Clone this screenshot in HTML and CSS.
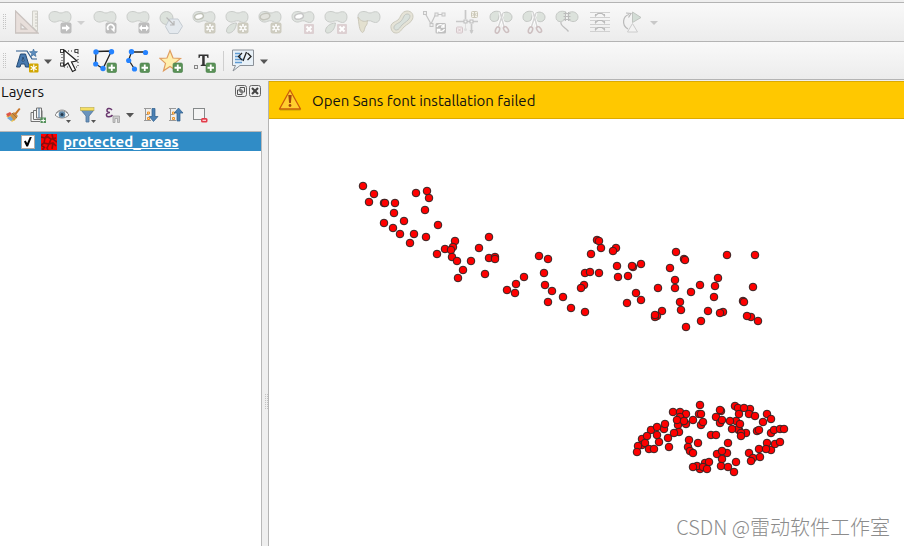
FILE: index.html
```html
<!DOCTYPE html>
<html lang="en">
<head>
<meta charset="utf-8">
<title>Layers</title>
<link rel="stylesheet" href="styles.css">
</head>
<body>
<svg class="defs" aria-hidden="true">
  <defs>
    <path id="blob" d="M1 6.500C1 3 3.500 1.500 7 1.500C10 1.500 10.500 3 13 3C15 3 16 1.700 18.500 1.700C21.500 1.700 23 4 23 7C23 10.500 21 12.500 18.500 12.500C15.500 12.500 14.500 10.300 11.500 10.800C9 11.200 8 12.500 5.500 12C2.500 11.500 1 9.500 1 6.500Z" fill="#dfe3df" stroke="#c9ccc9"/>
    <path id="leaf" d="M11.500 13C6 13 1.500 17 1.500 21C1.500 23 3.500 23.500 5.500 22.700C9 21.500 11 17.500 11.500 13Z" fill="#dce2dc" stroke="#c6c9c6"/>
    <g id="star-badge"><rect x="12.500" y="12.500" width="11" height="11" rx="2" fill="#cdcbbf"/><path d="M18 14v8M14.500 16l7 4M21.500 16l-7 4" stroke="#fff" stroke-width="1.600"/><circle cx="18" cy="18" r="1.200" fill="#cdcbbf"/></g>
    <g id="x-badge"><rect x="13" y="14" width="10" height="10" rx="1" fill="#ddd0d2"/><path d="M15.500 16.500l5 5M20.500 16.500l-5 5" stroke="#fff" stroke-width="2"/></g>
    <g id="plus-badge"><rect x="14" y="14" width="9.500" height="9.500" rx="1.500" fill="#5a9157" stroke="#47804a" stroke-width=".6"/><path d="M18.750 15.500v6.500M15.500 18.750h6.500" stroke="#fff" stroke-width="1.800"/></g>
    <g id="grey-badge"><rect x="12.500" y="12.500" width="11" height="11" rx="2" fill="#bdbdbd"/></g>
    <g id="scissors" fill="none"><path d="M11 2C7 0 1 2 1 7C1 12 6 12.500 9 10Z" fill="#dce2dc" stroke="#c4c7c4"/><path d="M13 4C17 0 23 3 23 7C23 12 17 13 14.500 10Z" fill="#dce2dc" stroke="#c4c7c4"/><path d="M11 2L15.500 18M14 3L9 18" stroke="#fff" stroke-width="3"/><path d="M11 2L15.500 18M14 3L9 18" stroke="#d4d4d4" stroke-width="1.500"/><ellipse cx="8.500" cy="20" rx="1.900" ry="3.300" transform="rotate(20 8.500 20)" stroke="#cdbfc0" stroke-width="1.600"/><ellipse cx="17" cy="19.500" rx="1.900" ry="3.300" transform="rotate(-35 17 19.500)" stroke="#cdbfc0" stroke-width="1.600"/></g>
  </defs>
</svg>

<div class="window">
  <header class="toolbars">
    <div class="toolbar" role="toolbar" aria-label="Advanced digitizing">
      <span class="grip"></span>
      <button class="tool" disabled aria-label="Enable advanced digitizing"><svg viewBox="0 0 24 24"><path d="M0.500 1V23H23Z M6 14v5h5.500Z" fill="#e8dfdb" fill-rule="evenodd" stroke="#c9c2bf" stroke-width="1.300"/><path d="M17.500 1h5v20.500l-5-5Z" fill="#efeee8" stroke="#cfcec8"/><path d="M20 4h2.500M20 7h2.500M20 10h2.500M20 13h2.500M20 16h2.500" stroke="#c7c6c0"/></svg></button>
      <div class="split">
        <button class="tool" disabled aria-label="Move feature"><svg viewBox="0 0 24 24"><use href="#blob"/><use href="#grey-badge"/><path d="M14 16.800h4v-2.300l4 3.500-4 3.500v-2.300h-4Z" fill="#fff"/></svg></button>
        <button class="caret" disabled aria-label="More move tools"><svg viewBox="0 0 12 24"><path d="M5 11h8l-4 4Z" fill="#d0d0d0"/></svg></button>
      </div>
      <button class="tool" disabled aria-label="Rotate feature"><svg viewBox="0 0 24 24"><use href="#blob"/><use href="#grey-badge"/><path d="M15.500 20A3.200 3.200 0 1 1 20.500 19.500" fill="none" stroke="#fff" stroke-width="1.700"/><path d="M17.500 18.500h4v4Z" fill="#fff"/></svg></button>
      <button class="tool" disabled aria-label="Scale feature"><svg viewBox="0 0 24 24"><use href="#blob"/><use href="#grey-badge"/><path d="M13 18l3-3.200v2.200h4v-2.200l3 3.200-3 3.200v-2.200h-4v2.200Z" fill="#fff"/></svg></button>
      <button class="tool" disabled aria-label="Simplify feature"><svg viewBox="0 0 24 24"><circle cx="7.500" cy="8" r="6.500" fill="#dce2dc" stroke="#c6c9c6"/><path d="M10.500 9h8.500l4.500 7.300-4.500 7.200h-8.500L6.500 16.500Z" fill="#e4e9ee" stroke="#c4cbd1"/><path d="M7.500 7.500l7 7M15 11v4h-4" stroke="#b6b6b6" stroke-width="1.200" fill="none"/></svg></button>
      <button class="tool" disabled aria-label="Add ring"><svg viewBox="0 0 24 24"><use href="#blob"/><ellipse cx="7" cy="6.500" rx="4.500" ry="2.700" fill="#fff" stroke="#bfc1b7" stroke-width="1.500" transform="rotate(-15 7 6.500)"/><use href="#star-badge"/></svg></button>
      <button class="tool" disabled aria-label="Add part"><svg viewBox="0 0 24 24"><use href="#blob"/><use href="#leaf"/><use href="#star-badge"/></svg></button>
      <button class="tool" disabled aria-label="Fill ring"><svg viewBox="0 0 24 24"><use href="#blob"/><ellipse cx="7" cy="6.500" rx="5" ry="3" fill="#e2e2dc" stroke="#c4c4bb" stroke-width="1.500" transform="rotate(-15 7 6.500)"/><use href="#star-badge"/></svg></button>
      <button class="tool" disabled aria-label="Delete ring"><svg viewBox="0 0 24 24"><use href="#blob"/><ellipse cx="8" cy="6.500" rx="4.500" ry="2.700" fill="#fff" stroke="#c6c6c6" stroke-width="1.500" transform="rotate(-15 8 6.500)"/><use href="#x-badge"/></svg></button>
      <button class="tool" disabled aria-label="Delete part"><svg viewBox="0 0 24 24"><use href="#blob"/><use href="#leaf"/><use href="#x-badge"/></svg></button>
      <button class="tool" disabled aria-label="Reshape features"><svg viewBox="0 0 24 24"><use href="#blob"/><path d="M1 7C2 13 2 21 5.500 22.500C8 22 7 17 9.500 15C11 13.500 9.500 11 11 10.500C8 12 4 12 1 7Z" fill="#e3e0cf" stroke="#cbc8ba"/></svg></button>
      <button class="tool" disabled aria-label="Offset curve"><svg viewBox="0 0 24 24"><path d="M1 18C0 13 5 12 8 10C11 7 11 1.500 17 1C22 1 24 5 22.500 9C21 13 17 14 14 17C11 20 10 23 6 23C3 23 1.500 21 1 18Z" fill="#e5e3d7" stroke="#cccabd"/><path d="M4 18C3.500 15 7 14 10 12C14 9 13 4.500 17 4C20 4 20.500 6 19.500 8C18 11 15 12 12 15C10 17 9 20 6.500 20C5 20 4 19 4 18Z" fill="#dae1dc" stroke="#c2c6c1"/></svg></button>
      <button class="tool" disabled aria-label="Split features"><svg viewBox="0 0 24 24"><path d="M2 3l6 11L12.500 4.500H21" fill="none" stroke="#c4c4c4" stroke-width="1.200"/><g fill="#eee" stroke="#c4c4c4"><rect x=".5" y="1.500" width="3" height="3"/><rect x="7" y="13.500" width="3" height="3"/><rect x="12" y="3" width="3" height="3"/><rect x="19" y="3" width="3" height="3"/></g><rect x="12.500" y="13" width="10.500" height="10.500" rx="1.500" fill="#bfbfbf"/><path d="M14 17c1-3 5-3 6.500-1M21 14v3h-3M21.500 19c-1 3-5 3-6.500 1M14.500 22.500v-3h3" fill="none" stroke="#fff" stroke-width="1.300"/></svg></button>
      <button class="tool" disabled aria-label="Vertex tool"><svg viewBox="0 0 24 24"><path d="M9.500 0v9M15.500 14v9M0 11.500h22" stroke="#c8c8c8" stroke-width="1.700"/><path d="M9.500 12v7" stroke="#ddd"/><g fill="#f4f4f4" stroke="#bdbdbd"><rect x="8" y="10" width="3" height="3"/><rect x="14" y="10" width="3" height="3"/></g><path d="M13.500 20h4l-2 4Z" fill="#c8c8c8"/><circle cx="9.500" cy="19.500" r="1.500" fill="#ddd"/><rect x="15.500" y="1.500" width="6" height="6" rx="1" fill="#f4f2e9" stroke="#cbc8b9"/><path d="M18.500 2v5M16.500 3.500l4 2M20.500 3.500l-4 2" stroke="#cbc8b9"/><rect x=".5" y="17" width="6" height="6" rx="1" fill="#f3eaec" stroke="#d4c7ca"/><path d="M2 18.500l3 3M5 18.500l-3 3" stroke="#d4c7ca"/></svg></button>
      <button class="tool" disabled aria-label="Split parts"><svg viewBox="0 0 24 24"><use href="#scissors"/></svg></button>
      <button class="tool" disabled aria-label="Split geometry"><svg viewBox="0 0 24 24"><use href="#scissors"/></svg></button>
      <button class="tool" disabled aria-label="Merge features"><svg viewBox="0 0 24 24"><path d="M11 2C6 0 1 2 1 7C1 12 6 13 10 9.500Z" fill="#dce2dc" stroke="#c6c9c6"/><path d="M13 3C18 0 23 3 23 7C23 12 17 13 13.500 9.500Z" fill="#dce2dc" stroke="#c6c9c6"/><path d="M8.500 3.500h7M8.500 6.500h7M8.500 9.500h7M10.500 2v9M13.500 2v9" stroke="#bcbcbc"/><path d="M6 12C5 16 10 17 13.500 21.500" fill="none" stroke="#bebebe" stroke-width="1.300"/></svg></button>
      <button class="tool" disabled aria-label="Merge attributes"><svg viewBox="0 0 24 24"><path d="M2 2.500h20M2 7.500h20M2 10.500h20M2 14.500h20M2 17.500h20M2 21.500h20" stroke="#d0d0d0"/><path d="M7 6l3-2.500h4L17 6M7 13l3-2.500h4L17 13M7 20l3-2.500h4L17 20" fill="none" stroke="#b8b8b8" stroke-width="1.200"/><path d="M7.500 4v2.500M16.500 4v2.500M7.500 11v2.500M16.500 11v2.500M7.500 18v2.500M16.500 18v2.500" fill="none" stroke="#bbb"/></svg></button>
      <div class="split">
        <button class="tool" disabled aria-label="Rotate symbols"><svg viewBox="0 0 24 24"><path d="M11.500 2v10.500l8.500-5Z" fill="#d3ddd6" stroke="#c0c4c0"/><path d="M11.500 13.500l5 8.500h-10Z" fill="#f3f3f3" stroke="#ccc"/><path d="M7 19C0 15 2 6 8 4.500M5 3l5 .5-2.500 4" fill="none" stroke="#b9b9b9" stroke-width="1.200"/></svg></button>
        <button class="caret" disabled aria-label="More rotate tools"><svg viewBox="0 0 12 24"><path d="M5 11h8l-4 4Z" fill="#c8c8c8"/></svg></button>
      </div>
    </div>
    <div class="toolbar" role="toolbar" aria-label="Annotations">
      <span class="grip"></span>
      <div class="split">
        <button class="tool" aria-label="New annotation layer"><svg viewBox="0 0 24 24"><path d="M1 2h11l5 8h5" fill="none" stroke="#2c5a8c" stroke-width="1.200"/><path d="M1.500 18L5.500 5h5l4 13h-4l-.8-3H6L5 18ZM7 12h2.200L8 8Z" fill="#487ab0" stroke="#244b75" fill-rule="evenodd"/><path d="M18.500 0l1 2.500 3 .2-2.300 1.800.8 3-2.500-1.600L16 7.500l.8-3L14.500 2.700l3-.2Z" fill="#5d8dbe" stroke="#346695" stroke-width=".6"/><rect x="14" y="14.500" width="9.500" height="9" rx="1" fill="#d1a600"/><path d="M18.750 15.500v7M15.700 17.200l6 3.600M21.700 17.200l-6 3.600" stroke="#fff" stroke-width="1.200"/></svg></button>
        <button class="caret" aria-label="More annotation layers"><svg viewBox="0 0 12 24"><path d="M5 10.500h8l-4 4.500Z" fill="#555"/></svg></button>
      </div>
      <button class="tool" aria-label="Select annotation"><svg viewBox="0 0 24 24"><path d="M2 2h16v16H2Z" fill="none" stroke="#333" stroke-dasharray="1 2"/><g fill="#f6f6f6" stroke="#444"><rect x=".5" y=".5" width="3" height="3"/><rect x="15" y=".5" width="3" height="3"/><rect x=".5" y="14" width="3" height="3"/></g><path d="M4 1v16l4-3 4.500 8.500 3-1.500-4-8 5.500-1Z" fill="#fff" stroke="#222" stroke-width="1.200"/></svg></button>
      <button class="tool" aria-label="Create polygon annotation"><svg viewBox="0 0 24 24"><path d="M3 2.500L18.500 2L10 19.500 2.500 15Z" fill="#f5f5f5" stroke="#222" stroke-width="1.300"/><g fill="#2583ff"><circle cx="3" cy="2.900" r="2.700"/><circle cx="18.500" cy="2.800" r="2.700"/><circle cx="2.700" cy="15" r="2.600"/><circle cx="10" cy="19.500" r="2.700"/></g><use href="#plus-badge"/></svg></button>
      <button class="tool" aria-label="Create line annotation"><svg viewBox="0 0 24 24"><path d="M19.500 3L5.500 2.800 2.700 11 8.500 20" fill="none" stroke="#222" stroke-width="1.300"/><g fill="#2583ff"><circle cx="19.500" cy="3.500" r="2.600"/><circle cx="5.500" cy="2.800" r="2.700"/><circle cx="2.700" cy="11.500" r="2.600"/><circle cx="8.500" cy="20" r="2.600"/></g><use href="#plus-badge"/></svg></button>
      <button class="tool" aria-label="Create marker annotation"><svg viewBox="0 0 24 24"><path d="M11 1.500l3 7.500 7.500.4-6 5 2 7.400L11 17.500l-6.500 4.300 2-7.400-5.500-5L8 9Z" fill="#ffefad" stroke="#df9d60" stroke-width="1.200"/><use href="#plus-badge"/></svg></button>
      <button class="tool" aria-label="Create text annotation"><svg viewBox="0 0 24 24"><path d="M6.500 5.500h10v3.500h-1l-.7-2H12.700V15.500l1.500.5v1h-5.500v-1l1.500-.5V7H8.200L7.500 9h-1Z" fill="#333"/><rect x="2.500" y="16.500" width="3" height="3" fill="#eee" stroke="#888"/><use href="#plus-badge"/></svg></button>
      <span class="separator"></span>
      <div class="split">
        <button class="tool" aria-label="HTML annotation"><svg viewBox="0 0 24 24"><path d="M1.500 1h21v15.500H9L2 22l2.500-5.500h-3Z" fill="#e8f1f8" stroke="#8c9299"/><path d="M4 4.500h5M4 7.500h6M4 10.500h9M4 13.500h7" stroke="#5e9bd2" stroke-width="1.600"/><path d="M11 4l-3.500 3.500L11 11M16.500 4L20 7.500 16.500 11M15.500 3l-3.500 9" fill="none" stroke="#222" stroke-width="1.300"/></svg></button>
        <button class="caret" aria-label="More annotations"><svg viewBox="0 0 12 24"><path d="M5 10.500h8l-4 4.500Z" fill="#555"/></svg></button>
      </div>
    </div>
  </header>

  <div class="workspace">
    <aside class="panel">
      <div class="panel-title">
        <h1>Layers</h1>
        <button class="dock" aria-label="Float panel"><svg viewBox="0 0 12 12"><rect x=".5" y=".5" width="11" height="11" rx="2" fill="none" stroke="#666"/><path d="M5 2.500h4.500v4.500H5ZM2.500 5H7v4.500H2.500Z" fill="#eee" stroke="#555"/></svg></button>
        <button class="dock" aria-label="Close panel"><svg viewBox="0 0 12 12"><rect x=".5" y=".5" width="11" height="11" rx="2" fill="none" stroke="#666"/><path d="M3 3l6 6M9 3l-6 6" stroke="#444" stroke-width="2"/></svg></button>
      </div>
      <div class="panel-tools" role="toolbar" aria-label="Layer tools">
        <button class="small" aria-label="Layer styling"><svg viewBox="0 0 16 16"><path d="M1 9l4-3 7 5-5 4Z" fill="#f2c74b"/><path d="M1 7l4-2 2 2-4 3Z" fill="#dd5648"/><path d="M2 11l4-2 3 3-3 2Z" fill="#6fa9de"/><path d="M5 8l4-3 4 4-4 5Z" fill="#cf9240"/><path d="M9 7l5-6 1.500 1L11 8Z" fill="#c87628"/><path d="M7 6l5 5" stroke="#996c45"/></svg></button>
        <button class="small" aria-label="Add group"><svg viewBox="0 0 16 16"><g fill="#f4f4f4" stroke="#727272"><path d="M3.500 5.500h-2.500v9h9M6 3.500h-2.500v9h8.500v-9"/><path d="M6.500 1h5v10h-5Z"/></g><path d="M9 1v10" stroke="#426d94"/><path d="M10.500 10.500h5.500v5.500h-5.500Z" fill="#54915a"/><path d="M13.250 11.500v4M11.250 13.500h4" stroke="#fff"/></svg></button>
        <button class="small" aria-label="Manage map themes"><svg viewBox="0 0 16 16"><path d="M0 8C3 3 10 2 14 8C10 12 4 12 0 8Z" fill="#fafafa" stroke="#888"/><circle cx="7" cy="7.500" r="3.300" fill="#628bab"/><circle cx="7" cy="7.500" r="1.500" fill="#25384a"/><path d="M1 6C4 2 10 2 13 6" fill="none" stroke="#999"/><path d="M11 13h5l-2.500 3Z" fill="#555"/></svg></button>
        <button class="small" aria-label="Filter legend"><svg viewBox="0 0 16 16"><path d="M1 3l5 6v6h3V9l5-6Z" fill="#6a94bd" stroke="#4b7299" stroke-width=".8"/><rect x=".5" y=".5" width="13.500" height="3" fill="#f5df63" stroke="#b9aa4c" stroke-width=".6"/><path d="M11 13h5l-2.500 3Z" fill="#555"/></svg></button>
        <button class="small" aria-label="Filter legend by expression"><svg viewBox="0 0 16 16"><path d="M7 3C5 .5 1.500 1.500 2 3.500C2 5 4 5.500 5 5.500C2.500 5.500 1 7 1.500 8.500C2 10.500 6 10 7.500 8" fill="none" stroke="#69376e" stroke-width="1.500"/><path d="M8 9h6.500v6.500h-2v-4h-2.500v4H8Z" fill="#ccc" stroke="#999" stroke-width=".7"/></svg></button>
        <button class="small-caret" aria-label="More filters"><svg viewBox="0 0 8 16"><path d="M0 6h8l-4 4.500Z" fill="#555"/></svg></button>
        <button class="small" aria-label="Expand all"><svg viewBox="0 0 16 16"><path d="M1 1.500h7M2.500 1.500v12M1 13.500h7M2.500 7.500h3" fill="none" stroke="#999"/><path d="M4.500 5h2v2h-2ZM4.500 10.500h2v2h-2Z" fill="#ffe0a8" stroke="#ee942c"/><path d="M9 1.500h3v8h3L10.500 14.500 6.300 9.500h2.700Z" fill="#4b80b4" stroke="#2b5b8a" stroke-width=".7"/></svg></button>
        <button class="small" aria-label="Collapse all"><svg viewBox="0 0 16 16"><path d="M1 1.500h7M2.500 1.500v12M1 13.500h7M2.500 7.500h3" fill="none" stroke="#999"/><path d="M4.500 5h2v2h-2ZM4.500 10.500h2v2h-2Z" fill="#ffe0a8" stroke="#ee942c"/><path d="M9 14h3V6h3L10.500 1 6.300 6h2.700Z" fill="#4b80b4" stroke="#2b5b8a" stroke-width=".7"/></svg></button>
        <button class="small" aria-label="Remove layer"><svg viewBox="0 0 16 16"><rect x=".5" y="1.500" width="11" height="11" fill="#f4f4f4" stroke="#85898a"/><rect x="8" y="11" width="6.500" height="4.500" rx="1.500" fill="#e33c4b"/><path d="M9.500 13.250h3.500" stroke="#fff"/></svg></button>
      </div>
      <ul class="tree">
        <li class="layer">
          <input type="checkbox" id="layer-visible" checked>
          <svg class="swatch" viewBox="0 0 16 16" aria-hidden="true"><rect width="16" height="16" fill="#f00"/><path d="M0 3l4 1 3-4M4 4l-1 5 5 1 2-5-3-2ZM8 10l-2 4 1 2M3 9l-3 2 4 3M10 5l5-1M8 10l4-1 3 3M12 9l-1 6M11 0l1 5 4 3M2 14v2" fill="none" stroke="#8c0c0c" stroke-width="1.600"/></svg>
          <label for="layer-visible">protected_areas</label>
        </li>
      </ul>
    </aside>
    <div class="splitter"></div>
    <main class="map">
      <div class="message" role="alert">
        <svg viewBox="0 0 24 24" aria-hidden="true"><path d="M12 2L22.500 21h-21Z" fill="#ffce2e" stroke="#cb5c0c" stroke-width="1.300" stroke-linejoin="round"/><path d="M2 22h20.500" stroke="#a98300" opacity=".6"/><path d="M10.300 7h3.400l-.8 8h-1.800Z" fill="#a4480a"/><circle cx="12" cy="17.500" r="1.400" fill="#a4480a"/></svg>
        <span>Open Sans font installation failed</span>
      </div>
      <div class="canvas">
        <svg class="points" role="img" aria-label="protected_areas"><g id="points" transform="translate(-269 -119)"></g></svg>
        <p class="watermark">CSDN @雷动软件工作室</p>
      </div>
    </main>
  </div>
</div>
<script src="points.js"></script>
</body>
</html>
```
FILE: styles.css
```css
* {
  box-sizing: border-box;
}

body {
  margin: 0;
  background: #efefef;
  color: #111;
  font-family: Ubuntu, "Noto Sans", "Open Sans", sans-serif;
  font-size: 15px;
}

button {
  padding: 0;
  border: 0;
  background: none;
}

svg {
  display: block;
}

.defs {
  position: absolute;
  width: 0;
  height: 0;
}

.window {
  display: flex;
  flex-direction: column;
  height: 100vh;
  overflow: hidden;
}

.toolbars {
  padding-top: 2px;
}

.toolbar {
  display: flex;
  align-items: center;
  gap: 9px;
  height: 39px;
  padding-left: 2px;
  border-top: 1px solid #b4b4b4;
  background: linear-gradient(#f9f9f9, #ececec);
}

.toolbar:last-child {
  border-bottom: 1px solid #b4b4b4;
}

.grip {
  width: 4px;
  height: 16px;
  background: repeating-conic-gradient(#c4c4c4 0 25%, transparent 0 100%) 0 0 / 2px 2px;
}

.tool,
.tool svg {
  width: 24px;
  height: 24px;
}

.split {
  display: flex;
}

.caret,
.caret svg {
  width: 12px;
  height: 24px;
  overflow: visible;
}

.separator {
  width: 1px;
  height: 20px;
  margin: 0 -2px;
  background: #cfcfcf;
}

.workspace {
  display: flex;
  flex: 1;
  min-height: 0;
  padding-top: 1px;
}

.panel {
  display: flex;
  flex-direction: column;
  width: 262px;
}

.panel-title {
  display: flex;
  align-items: center;
  gap: 2px;
  height: 20px;
  padding: 0 1px;
}

h1 {
  flex: 1;
  margin: 0;
  font-size: 15px;
  font-weight: 400;
}

.dock,
.dock svg {
  width: 12px;
  height: 12px;
}

.panel-tools {
  display: flex;
  align-items: center;
  gap: 9px;
  height: 30px;
  padding: 0 0 2px 5px;
}

.small,
.small svg {
  width: 16px;
  height: 16px;
}

.small-caret,
.small-caret svg {
  width: 8px;
  height: 16px;
}

.small-caret {
  margin-left: -4px;
}

.tree {
  flex: 1;
  margin: 0;
  padding: 0;
  border: solid #b8b8b8;
  border-width: 1px 1px 0 0;
  background: #fff;
  list-style: none;
}

.layer {
  display: flex;
  align-items: center;
  gap: 6px;
  height: 19px;
  padding-left: 21px;
  background: #308cc6;
  color: #fff;
  font-weight: 700;
  text-decoration: underline;
}

.layer input {
  appearance: none;
  width: 14px;
  height: 14px;
  margin: 0;
  border: 1px solid #b5aaa2;
  background: #fff;
}

.layer input:checked::before {
  content: "";
  display: block;
  width: 8px;
  height: 10px;
  margin: 1px 2px;
  background: #000;
  clip-path: polygon(0 50%, 20% 40%, 40% 65%, 75% 0, 100% 0, 50% 100%, 30% 100%);
}

.swatch {
  width: 16px;
  height: 16px;
}

.splitter {
  display: flex;
  align-items: center;
  width: 6px;
}

.splitter::before {
  content: "";
  width: 4px;
  height: 16px;
  margin: 176px 0 0 2px;
  background: repeating-conic-gradient(#c4c4c4 0 25%, transparent 0 100%) 0 0 / 2px 2px;
}

.map {
  display: flex;
  flex: 1;
  flex-direction: column;
  min-width: 0;
  border-left: 1px solid #b4b4b4;
  background: #fff;
}

.message {
  display: flex;
  align-items: center;
  gap: 10px;
  height: 38px;
  padding-left: 9px;
  border: solid #dcaa00;
  border-width: 1px 0;
  background: #ffc800;
}

.message svg {
  width: 24px;
  height: 24px;
}

.canvas {
  position: relative;
  flex: 1;
  min-height: 0;
}

.points {
  width: 100%;
  height: 100%;
}

.points circle {
  fill: #f00;
  stroke: #302525;
  stroke-width: 1px;
}

.watermark {
  position: absolute;
  right: 14px;
  bottom: 4px;
  margin: 0;
  color: #8c8c8c;
  font-family: "Noto Sans CJK SC", sans-serif;
  font-size: 20px;
  font-weight: 300;
  line-height: 30px;
}
```
FILE: points.js
```javascript
const points = `
363,186 374,194 369,202 384,203 385,203 395,203 394,213 384,223 393,228 404,221 400,234 410,243
414,234 426,237 416,193 427,191 429,198 425,210 438,225 437,254 445,249 455,241 453,247 451,250
452,257 457,261 463,270 458,278 471,261 479,248 489,237 489,258 495,257 495,259 485,274
539,256 548,259 524,277 516,284 507,290 515,293 544,273 545,285 552,291 548,302 563,297 571,308
585,312 584,285 581,288 585,273 590,272 599,273 591,254 597,240 599,241 601,248 616,248 613,251
617,266 618,277 628,276 633,267 632,266 641,264 636,293 641,300 627,303
676,252 684,259 685,260 670,268 675,280 675,288 658,288 691,292 700,285 718,278 715,286 714,297
727,255 755,255 753,287 743,301 744,302 751,317 747,316 758,321 723,312 720,313 708,311 701,321
686,327 680,302 681,310 662,311 657,316 655,317 655,315
700,405 699,414 701,414 673,412 680,412 686,414 680,417 686,424 678,425 677,420 684,421 693,420
701,425 703,422 664,429 665,424 651,430 657,427 657,435 642,439 647,436 642,445 645,443 638,446
637,452 649,449 654,449 659,442 668,438 679,432 674,433 669,447 689,440 688,447 690,451 693,453
698,443 700,469 697,466 693,467 705,463 703,467 709,462 707,469
721,411 720,410 716,417 720,423 722,420 735,406 738,408 750,409 744,408 739,414 749,414 755,416
736,421 730,421 739,430 738,429 740,424 732,429 746,433 741,433 741,436 757,431 759,430 767,414
771,419 763,422 771,433 774,430 780,429 784,429 711,435 716,435 728,443 727,453 717,454 722,451
722,459 721,466 728,467 734,472 736,462 749,453 753,458 751,461 760,457 759,449 767,443 771,450
766,449 775,444 780,442
`;

const layer = document.getElementById("points");
for (const pair of points.trim().split(/\s+/)) {
  const [x, y] = pair.split(",");
  const dot = document.createElementNS("http://www.w3.org/2000/svg", "circle");
  dot.setAttribute("cx", x);
  dot.setAttribute("cy", y);
  dot.setAttribute("r", "3.8");
  layer.append(dot);
}
```
